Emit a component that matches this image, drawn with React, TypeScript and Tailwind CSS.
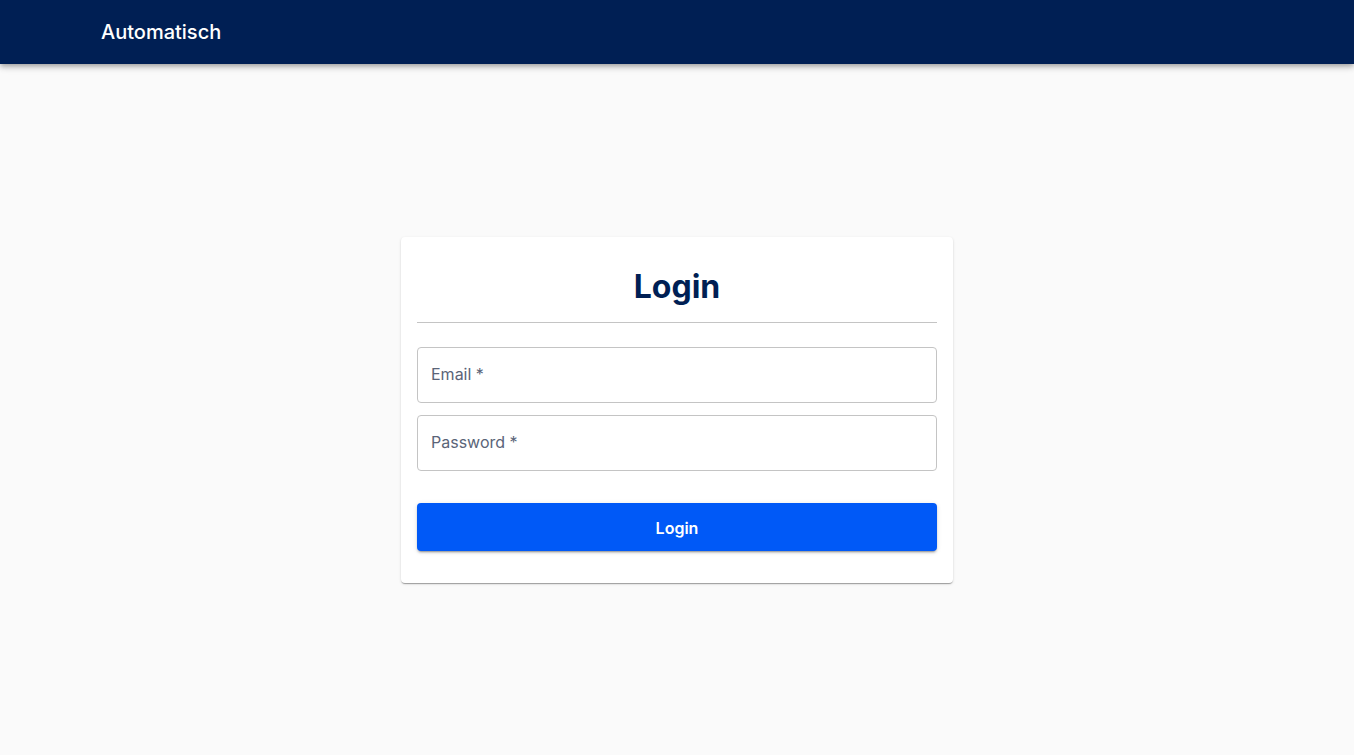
import React from "react";

export default function App() {
  return (
    <div className="min-h-screen bg-[#fafafa] font-['Inter',sans-serif]">
      <header className="h-16 bg-[#001f54] flex items-center shadow-[0_2px_4px_-1px_rgba(0,0,0,0.2),0_4px_5px_0_rgba(0,0,0,0.14),0_1px_10px_0_rgba(0,0,0,0.12)] relative z-10">
        <div className="pl-[101px] text-white text-[20px] font-medium">Automatisch</div>
      </header>
      <main className="flex justify-center pt-[173px]">
        <div className="w-[552px] bg-white rounded-[4px] shadow-[0_2px_1px_-1px_rgba(0,0,0,0.2),0_1px_1px_0_rgba(0,0,0,0.14),0_1px_3px_0_rgba(0,0,0,0.12)] px-4 pt-[26px] pb-8">
          <h1 className="text-center text-[32px] leading-[48px] font-bold text-[#001f54]">Login</h1>
          <div className="mt-[11px] h-px bg-[#c4c4c4]" />
          <div className="mt-6 flex flex-col gap-3">
            <div className="h-14 border border-[#c4c4c4] rounded-[4px] flex items-center px-[13px] pb-[2px] text-[16px] text-[#5a6478]">
              Email *
            </div>
            <div className="h-14 border border-[#c4c4c4] rounded-[4px] flex items-center px-[13px] pb-[2px] text-[16px] text-[#5a6478]">
              Password *
            </div>
          </div>
          <button className="mt-8 w-full h-12 rounded-[4px] bg-[#0059f7] text-white text-[16px] font-semibold pt-px shadow-[0_3px_1px_-2px_rgba(0,0,0,0.2),0_2px_2px_0_rgba(0,0,0,0.14),0_1px_5px_0_rgba(0,0,0,0.12)]">
            Login
          </button>
        </div>
      </main>
    </div>
  );
}
